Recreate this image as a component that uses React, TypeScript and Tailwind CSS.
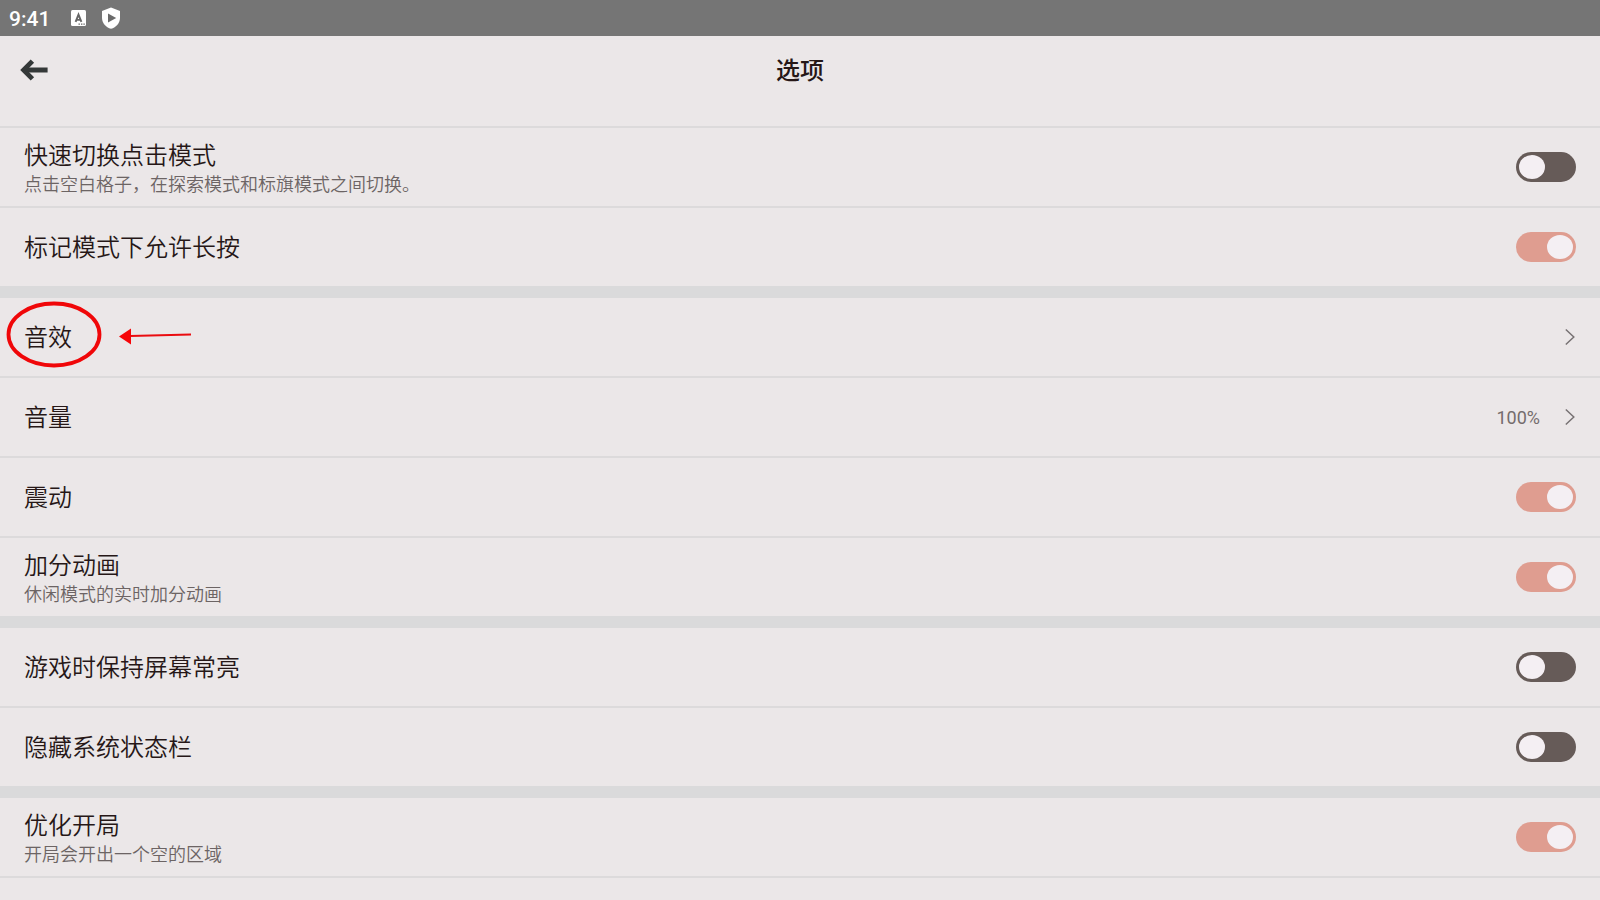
import React from 'react';

type Item = {
  id: string;
  title: string;
  desc?: string;
  kind: 'switch' | 'link';
  on?: boolean;
  value?: string;
  marked?: boolean;
};

const groups: Item[][] = [
  [
    { id: 'quick-switch', title: '快速切换点击模式', desc: '点击空白格子，在探索模式和标旗模式之间切换。', kind: 'switch' },
    { id: 'long-press', title: '标记模式下允许长按', kind: 'switch', on: true },
  ],
  [
    { id: 'sound', title: '音效', kind: 'link', marked: true },
    { id: 'volume', title: '音量', kind: 'link', value: '100%' },
    { id: 'vibrate', title: '震动', kind: 'switch', on: true },
    { id: 'score-anim', title: '加分动画', desc: '休闲模式的实时加分动画', kind: 'switch', on: true },
  ],
  [
    { id: 'keep-awake', title: '游戏时保持屏幕常亮', kind: 'switch' },
    { id: 'hide-status', title: '隐藏系统状态栏', kind: 'switch' },
  ],
  [{ id: 'opening', title: '优化开局', desc: '开局会开出一个空的区域', kind: 'switch', on: true }],
];

const StatusBar = () => (
  <div className="flex h-9 items-center bg-[#757575] pl-[9px] text-white">
    <span className="w-[62px] pt-0.5 text-[21px] leading-7 font-medium">9:41</span>
    <svg width="15" height="16" viewBox="0 0 15 16" aria-hidden="true">
      <rect width="15" height="16" rx="1.5" fill="#fff" />
      <path d="M4.6 11.9 7.5 4.6l2.9 7.3M5.5 9.9h4" fill="none" stroke="#666" strokeWidth="1.9" />
      <path d="M7.5 14.2h1.4M10 14.2h1.4M12.4 14.2h1.4" stroke="#666" strokeWidth="1.3" />
    </svg>
    <svg className="ml-4" width="18" height="22" viewBox="0 0 18 22" aria-hidden="true">
      <path d="M9 .4 18 4v6.9c0 5-3.8 9.2-9 10.9-5.2-1.7-9-5.9-9-10.9V4z" fill="#fff" />
      <path d="M6 6.6v9l8.2-4.5z" fill="#6b6b6b" />
    </svg>
  </div>
);

const Chevron = () => (
  <svg width="12" height="18" viewBox="0 0 12 18" fill="none" aria-hidden="true">
    <path d="M1.8 1.5 9.8 9l-8 7.5" stroke="#777273" strokeWidth="1.5" />
  </svg>
);

const ItemText = ({ item }: { item: Item }) => (
  <span className="flex flex-col items-start pt-0.5 font-[350]">
    <span className="text-2xl leading-[34px] text-[#261717]">{item.title}</span>
    {item.desc && <span className="text-lg leading-6 text-[#6c6464]">{item.desc}</span>}
  </span>
);

/* hand-drawn circle and arrow around the highlighted entry */
const Marker = () => (
  <svg className="pointer-events-none absolute top-0 left-0" width="200" height="78" viewBox="0 0 200 78" fill="none" aria-hidden="true">
    <ellipse cx="54" cy="36.5" rx="45.5" ry="31" stroke="#f00709" strokeWidth="3.8" />
    <path d="M130 38 191 36.5" stroke="#ea0c10" strokeWidth="2" />
    <path d="M119 38.5 131 30.5v16z" fill="#f60508" />
  </svg>
);

const Row = ({ item }: { item: Item }) => {
  if (item.kind === 'link') {
    return (
      <button type="button" className="relative flex h-[78px] w-full items-center justify-between px-6 text-left">
        <ItemText item={item} />
        <span className="flex items-center gap-6">
          {item.value && <span className="pt-0.5 text-lg text-[#746c6c]">{item.value}</span>}
          <Chevron />
        </span>
        {item.marked && <Marker />}
      </button>
    );
  }

  return (
    <label htmlFor={item.id} className="flex h-[78px] items-center justify-between px-6">
      <ItemText item={item} />
      <input
        id={item.id}
        type="checkbox"
        role="switch"
        defaultChecked={item.on}
        className="flex h-[30px] w-[60px] shrink-0 appearance-none items-center rounded-full bg-[#665b58] px-[3px] before:h-6 before:w-[26px] before:rounded-[50%] before:bg-[#f4eff3] before:content-[''] checked:justify-end checked:bg-[#df9d90]"
      />
    </label>
  );
};

const App = () => {
  return (
    <div className="min-h-screen bg-[#ebe7e8] font-['Roboto','Noto_Sans_CJK_SC',sans-serif]" lang="zh-CN">
      <StatusBar />

      <header className="grid h-[68px] grid-cols-[1fr_auto_1fr] items-center px-5">
        <button type="button" aria-label="返回" className="justify-self-start">
          <svg width="28" height="22" viewBox="0 0 28 22" fill="none" aria-hidden="true">
            <path d="M27.6 11H5" stroke="#343838" strokeWidth="5" />
            <path d="M12.4 2.1 3.6 11l8.8 8.9" stroke="#343838" strokeWidth="4.8" />
          </svg>
        </button>
        <h1 className="pt-0.5 text-2xl font-medium text-[#261717]">选项</h1>
      </header>

      <main className="pt-[22px]">
        <div className="divide-y-[12px] divide-[#dadadb] border-y-2 border-[#dcdadb]">
          {groups.map((group) => (
            <section key={group[0].id}>
              <div className="divide-y-2 divide-[#dcdadb]">
                {group.map((item) => (
                  <div key={item.id}>
                    <Row item={item} />
                  </div>
                ))}
              </div>
            </section>
          ))}
        </div>
      </main>
    </div>
  );
};

export default App;
